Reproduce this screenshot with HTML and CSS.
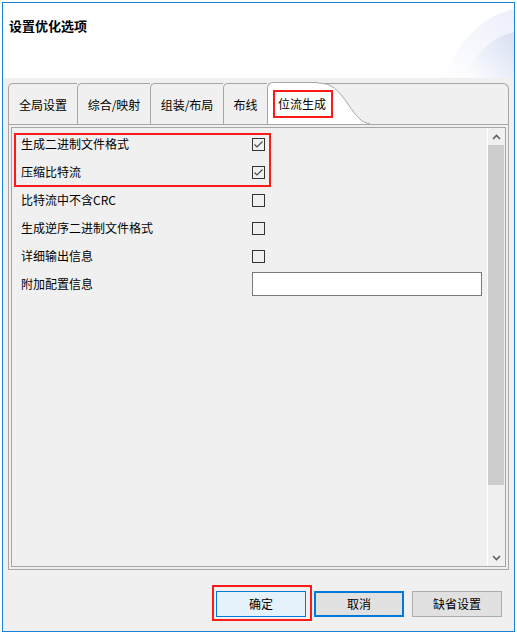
FILE: index.html
```html
<!DOCTYPE html>
<html>
<head>
<meta charset="utf-8">
<title>设置优化选项</title>
<link rel="stylesheet" href="styles.css">
</head>
<body>
<div class="window">
  <div class="header">
    <div class="title">设置优化选项</div>
    <svg class="deco" width="80" height="75" viewBox="0 0 80 75">
      <defs>
        <linearGradient id="g1" x1="0" y1="1" x2="1" y2="0">
          <stop offset="0" stop-color="#ffffff"/>
          <stop offset="1" stop-color="#eceffa"/>
        </linearGradient>
        <linearGradient id="g2" x1="0" y1="1" x2="1" y2="0.2">
          <stop offset="0" stop-color="#ffffff"/>
          <stop offset="1" stop-color="#dce2f4"/>
        </linearGradient>
      </defs>
      <path d="M10 75 C 22 42, 45 14, 80 6 L80 75 Z" fill="url(#g1)"/>
      <path d="M30 75 C 40 52, 58 34, 80 29 L80 75 Z" fill="url(#g2)"/>
    </svg>
  </div>
  <div class="main">
    <div class="notebook">
      <div class="tabs">
        <div class="tab t1">全局设置</div>
        <div class="tab t2">综合/映射</div>
        <div class="tab t3">组装/布局</div>
        <div class="tab t4">布线</div>
        <div class="tab active"><span class="hl-tab"></span>位流生成</div>
        <svg class="tail" width="52" height="42" viewBox="0 0 52 42">
          <path d="M0 0.5 C 14 0.5, 20 8, 30 22 C 38 34, 44 41.5, 52 41.5 L52 42 L0 42 Z" fill="#ffffff"/>
          <path d="M0 1.5 L52 1.5" stroke="#a6a6a6" stroke-width="1" fill="none"/>
          <path d="M0 1 C 14 1, 20 8, 30 22 C 38 34, 44 41.5, 52 41.5 L52 42 L0 42 Z" fill="#ffffff"/>
          <path d="M0 1 C 14 1, 20 8, 30 22 C 38 34, 44 41.5, 52 41.5" stroke="#a6a6a6" stroke-width="1" fill="none"/>
        </svg>
        <div class="filler"></div>
      </div>
      <div class="panel">
        <div class="frame">
          <div class="content">
            <div class="hl-rows"></div>
            <div class="row">
              <span class="label">生成二进制文件格式</span>
              <span class="check on"><svg width="11" height="11" viewBox="0 0 11 11"><polyline points="1.5,5.5 4,8 9.5,2.5" fill="none" stroke="#4a4a4a" stroke-width="1.2"/></svg></span>
            </div>
            <div class="row">
              <span class="label">压缩比特流</span>
              <span class="check on"><svg width="11" height="11" viewBox="0 0 11 11"><polyline points="1.5,5.5 4,8 9.5,2.5" fill="none" stroke="#4a4a4a" stroke-width="1.2"/></svg></span>
            </div>
            <div class="row">
              <span class="label">比特流中不含CRC</span>
              <span class="check"></span>
            </div>
            <div class="row">
              <span class="label">生成逆序二进制文件格式</span>
              <span class="check"></span>
            </div>
            <div class="row">
              <span class="label">详细输出信息</span>
              <span class="check"></span>
            </div>
            <div class="row">
              <span class="label">附加配置信息</span>
              <span class="input"></span>
            </div>
          </div>
          <div class="scrollbar">
            <div class="sb-btn"><svg width="9" height="6" viewBox="0 0 9 6"><polyline points="1,5 4.5,1.5 8,5" fill="none" stroke="#606060" stroke-width="1.6"/></svg></div>
            <div class="thumb"></div>
            <div class="track"></div>
            <div class="sb-btn"><svg width="9" height="6" viewBox="0 0 9 6"><polyline points="1,1 4.5,4.5 8,1" fill="none" stroke="#606060" stroke-width="1.6"/></svg></div>
          </div>
        </div>
      </div>
    </div>
    <div class="footer">
      <div class="btn ok">确定</div>
      <div class="btn cancel">取消</div>
      <div class="btn">缺省设置</div>
    </div>
  </div>
</div>
</body>
</html>
```

FILE: styles.css
```css
html, body {
  margin: 0;
  padding: 0;
  background: #ffffff;
}

body {
  font-family: "Noto Sans CJK SC", "Noto Sans", sans-serif;
  font-size: 12px;
  color: #000000;
}

.window {
  margin: 2px;
  width: 511px;
  height: 628px;
  border: 1px solid #1883d7;
  display: flex;
  flex-direction: column;
}

.header {
  height: 75px;
  flex: none;
  background: #ffffff;
  display: flex;
  align-items: flex-start;
}

.title {
  padding: 14px 0 0 6px;
  font-size: 13px;
  font-weight: bold;
  line-height: 18px;
}

.deco {
  margin-left: auto;
  display: block;
}

.main {
  flex: 1;
  background: #f0f0f0;
  padding: 4px 5px 0;
  display: flex;
  flex-direction: column;
}

.notebook {
  height: 488px;
  display: flex;
  flex-direction: column;
}

.tabs {
  height: 42px;
  display: flex;
  flex: none;
}

.tab {
  box-sizing: border-box;
  margin-top: 1px;
  height: 41px;
  border-top: 1px solid #a6a6a6;
  border-left: 1px solid #a6a6a6;
  border-top-left-radius: 5px;
  background: #f0f0f0;
  display: flex;
  align-items: center;
  justify-content: center;
  padding-top: 1px;
  line-height: 16px;
  white-space: nowrap;
}

.t1 { width: 69px; }
.t2 { width: 73px; }
.t3 { width: 73px; }
.t4 { width: 44px; }

.tab.active {
  margin-top: 0;
  height: 42px;
  width: 51px;
  background: #ffffff;
  border-top-left-radius: 6px;
  justify-content: flex-start;
  padding-left: 10px;
  position: relative;
}

.hl-tab {
  position: absolute;
  left: 5px;
  top: 7px;
  width: 60px;
  height: 28px;
  box-sizing: border-box;
  border: 2px solid #ff1a1a;
  z-index: 2;
}

.tail {
  display: block;
  flex: none;
}

.filler {
  flex: 1;
  box-sizing: border-box;
  margin-top: 1px;
  height: 41px;
  border-top: 1px solid #a6a6a6;
  border-right: 1px solid #a6a6a6;
  border-top-right-radius: 6px;
}

.panel {
  height: 446px;
  box-sizing: border-box;
  border: 1px solid #a6a6a6;
  padding: 2px;
  flex: none;
}

.frame {
  height: 100%;
  box-sizing: border-box;
  border: 1px solid #a6a6a6;
  display: flex;
}

.content {
  flex: 1;
  position: relative;
  border-right: 1px solid #ffffff;
  padding-top: 2px;
}

.hl-rows {
  position: absolute;
  left: 2px;
  top: 5px;
  width: 257px;
  height: 54px;
  box-sizing: border-box;
  border: 2px solid #ff1a1a;
}

.row {
  height: 28px;
  display: grid;
  grid-template-columns: 240px 1fr;
  align-items: center;
}

.label {
  padding-left: 9px;
  line-height: 16px;
  white-space: nowrap;
}

.check {
  width: 13px;
  height: 13px;
  box-sizing: border-box;
  border: 1px solid #333333;
  display: flex;
  align-items: center;
  justify-content: center;
}

.check svg {
  display: block;
}

.input {
  width: 230px;
  height: 24px;
  box-sizing: border-box;
  border: 1px solid #7a7a7a;
  background: #ffffff;
}

.scrollbar {
  width: 17px;
  background: #f0f0f0;
  display: flex;
  flex-direction: column;
}

.sb-btn {
  height: 17px;
  display: flex;
  align-items: center;
  justify-content: center;
}

.sb-btn svg {
  display: block;
}

.thumb {
  height: 340px;
  margin: 0 1px 0 0;
  background: #cdcdcd;
}

.track {
  flex: 1;
}

.footer {
  display: flex;
  justify-content: flex-end;
  gap: 8px;
  padding: 21px 7px 0 0;
}

.btn {
  width: 90px;
  height: 26px;
  box-sizing: border-box;
  border: 1px solid #adadad;
  background: #e1e1e1;
  display: flex;
  align-items: center;
  justify-content: center;
  line-height: 16px;
  position: relative;
}

.btn.ok {
  background: #e5f1fb;
  border-color: #0078d7;
}

.btn.ok::after {
  content: "";
  position: absolute;
  left: -5px;
  top: -7px;
  width: 100px;
  height: 36px;
  box-sizing: border-box;
  border: 2px solid #ff1a1a;
}

.btn.cancel {
  border: 2px solid #0078d7;
}
```
